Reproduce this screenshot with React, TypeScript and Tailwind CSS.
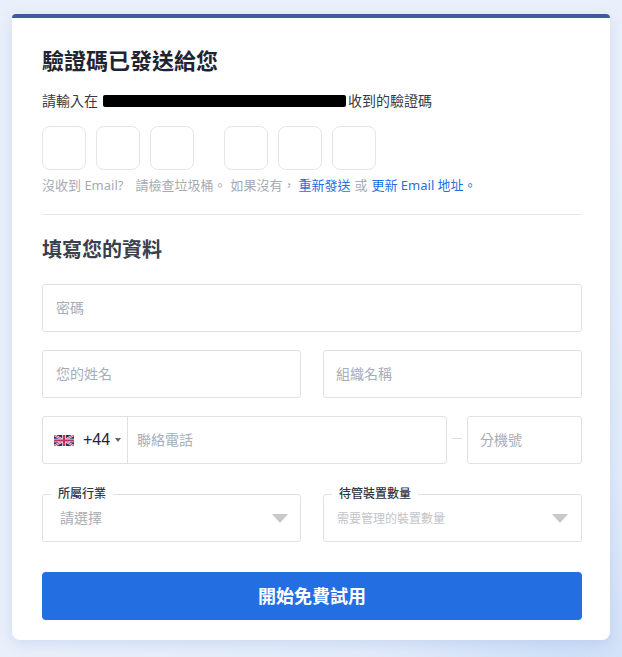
import React from "react";

const inputBox = "h-12 border border-[#dfe1e5] rounded-[3px] flex items-center text-sm text-[#a5adba] bg-white";

function Arrow() {
  return (
    <svg width="16" height="9" viewBox="0 0 16 9" className="shrink-0">
      <path d="M0 0H16L8 9Z" fill="#c8c8c8" />
    </svg>
  );
}

function UkFlag() {
  return (
    <svg width="20" height="11" viewBox="0 0 60 33" className="shrink-0">
      <rect width="60" height="33" fill="#27306b" />
      <path d="M0 0L60 33M60 0L0 33" stroke="#e8e4ee" strokeWidth="7" />
      <path d="M0 0L60 33M60 0L0 33" stroke="#c8324f" strokeWidth="2.5" />
      <path d="M30 0V33M0 16.5H60" stroke="#e8e4ee" strokeWidth="11" />
      <path d="M30 0V33M0 16.5H60" stroke="#c8324f" strokeWidth="6" />
    </svg>
  );
}

function Otp() {
  return <div className="w-11 h-11 border border-[#e6e6e6] rounded-lg bg-white" />;
}

function Legend({ label, placeholder, small, inset }: { label: string; placeholder: string; small?: boolean; inset: string }) {
  return (
    <div className={`relative h-12 w-[259px] border border-[#dfe1e5] rounded-[3px] flex items-center justify-between ${inset}`}>
      <span className="absolute -top-[8px] left-[8px] bg-white px-[7px] text-xs leading-[14px] font-medium text-[#2d3645]">{label}</span>
      <span className={small ? "text-xs text-[#c2c4c8] mt-[2px]" : "text-sm text-[#a9acb2]"}>{placeholder}</span>
      <Arrow />
    </div>
  );
}

export default function App() {
  return (
    <div
      className="w-[622px] h-[657px] overflow-hidden px-3 pt-[14px] bg-[radial-gradient(circle_at_92%_100%,#cfe0f8_0,#e2ebfa_22%,#e9f0fb_60%)]"
      style={{ fontFamily: '"Noto Sans", "Noto Sans CJK TC", sans-serif' }}
    >
      <div className="w-[598px] h-[626px] bg-white rounded-t-[4px] rounded-b-lg border-t-4 border-[#3f5b9e] shadow-[0_4px_14px_rgba(90,130,200,0.18)] pl-[30px] pr-[28px] flex flex-col">
        <h1 className="mt-[27px] text-[22px] leading-[30px] font-bold text-[#1f2530]">驗證碼已發送給您</h1>
        <p className="mt-[16px] text-sm leading-[20px] text-[#343a46] flex items-center">
          請輸入在<span className="inline-block w-[243px] h-3 bg-black rounded-[2px] ml-[5px] mr-[2px]" />收到的驗證碼
        </p>
        <div className="mt-[15px] flex">
          <div className="flex gap-[10px]"><Otp /><Otp /><Otp /></div>
          <div className="flex gap-[10px] ml-[30px]"><Otp /><Otp /><Otp /></div>
        </div>
        <p className="mt-[6px] text-[13px] leading-[18px] text-[#a6abb3] whitespace-nowrap flex">
          <span>沒收到 Email?</span>
          <span className="ml-[12px]">請檢查垃圾桶。</span>
          <span className="ml-[4px]">如果沒有，</span>
          <span className="ml-[3px] text-[#1f6fe0]">重新發送</span>
          <span className="ml-[4px]">或</span>
          <span className="ml-[4px] text-[#1f6fe0]">更新 Email 地址。</span>
        </p>
        <div className="mt-[20px] h-px bg-[#e8e8e8]" />
        <h2 className="mt-[21px] text-[20px] leading-[28px] font-bold text-[#3a404c]">填寫您的資料</h2>
        <div className={`${inputBox} mt-[20px] px-[13px]`}>密碼</div>
        <div className="mt-[18px] flex gap-[22px]">
          <div className={`${inputBox} w-[259px] px-[13px]`}>您的姓名</div>
          <div className={`${inputBox} w-[259px] px-[12px]`}>組織名稱</div>
        </div>
        <div className="mt-[18px] flex items-center">
          <div className={`${inputBox} w-[405px]`}>
            <div className="h-full w-[85px] flex items-center border-r border-[#dfe1e5] pl-[11px] shrink-0">
              <UkFlag />
              <span className="ml-[9px] text-base text-[#1c2430]" style={{ fontFamily: '"Liberation Sans", sans-serif' }}>+44</span>
              <span className="ml-[5px] w-0 h-0 border-x-[3px] border-x-transparent border-t-[4px] border-t-[#666]" />
            </div>
            <span className="ml-[9px]">聯絡電話</span>
          </div>
          <div className="w-[10px] h-px bg-[#dcdcdc] ml-[5px] mr-[5px] -mt-[4px]" />
          <div className={`${inputBox} flex-1 pl-[12px]`}>分機號</div>
        </div>
        <div className="mt-[30px] flex gap-[22px]">
          <Legend label="所屬行業" placeholder="請選擇" inset="pl-[17px] pr-[12px]" />
          <Legend label="待管裝置數量" placeholder="需要管理的裝置數量" small inset="pl-[13px] pr-[13px]" />
        </div>
        <button className="mt-[30px] h-12 w-full rounded bg-[#236fe2] text-white text-[18px] font-bold">開始免費試用</button>
      </div>
    </div>
  );
}
